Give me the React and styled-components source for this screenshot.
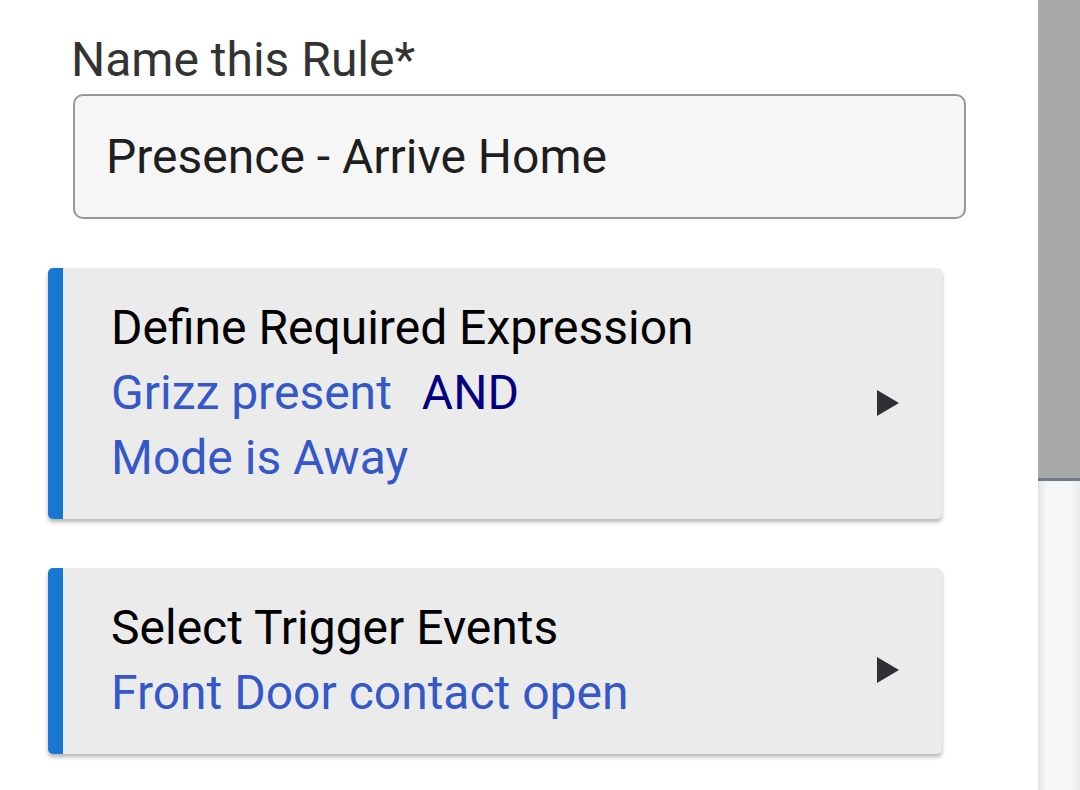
import React from "react";
import styled, { createGlobalStyle } from "styled-components";

const GlobalStyle = createGlobalStyle`
    html, body {
        margin: 0;
        padding: 0;
        background: #ffffff;
        font-family: Roboto, "Noto Sans", "Liberation Sans", sans-serif;
    }
`;

const Page = styled.div`
    display: flex;
    width: 1080px;
    height: 790px;
    overflow: hidden;
    background: #ffffff;
`;

const Content = styled.div`
    flex: 1;
    display: flex;
    flex-direction: column;
    padding: 0 0 0 48px;
`;

const Label = styled.div`
    margin: 30px 0 0 23px;
    font-size: 48px;
    line-height: 60px;
    color: #333333;
`;

const NameInput = styled.div`
    box-sizing: border-box;
    display: flex;
    align-items: center;
    margin: 4px 0 0 25px;
    width: 893px;
    height: 125px;
    padding: 0 0 0 31px;
    border: 2px solid #989898;
    border-radius: 10px;
    background: #f6f6f6;
    font-size: 48px;
    color: #1e1e1e;
`;

const Card = styled.div`
    box-sizing: border-box;
    display: flex;
    align-items: center;
    width: 894px;
    margin-top: ${(props) => props.mTop || "49px"};
    padding: 27px 43px 29px 48px;
    border-left: 15px solid #1976d2;
    border-radius: 5px;
    background: #ebebeb;
    box-shadow: 0 3px 4px rgba(0, 0, 0, 0.3);
`;

const CardText = styled.div`
    flex: 1;
    font-size: 48px;
    line-height: 65px;
`;

const Title = styled.div`
    color: #000000;
`;

const Cond = styled.div`
    color: #3558c8;
`;

const Op = styled.span`
    color: #000080;
    margin-left: 30px;
`;

const Arrow = styled.svg`
    width: 22px;
    height: 26px;
    margin-top: 20px;
    flex-shrink: 0;
`;

const ScrollBar = styled.div`
    width: 42px;
    display: flex;
    flex-direction: column;
`;

const Thumb = styled.div`
    height: 478px;
    background: #a9a9a9;
    border-bottom: 3px solid #6f7b8b;
`;

const Track = styled.div`
    flex: 1;
    background: linear-gradient(to right, #e2e2e2 0px, #f6f6f6 8px, #f6f6f6 32px, #ececec 42px);
`;

const PlayArrow = () => (
    <Arrow viewBox="0 0 22 26">
        <path d="M0 0 L22 13 L0 26 Z" fill="#2e3035" />
    </Arrow>
);

const RuleCard = ({ title, children, mTop }) => (
    <Card mTop={mTop}>
        <CardText>
            <Title>{title}</Title>
            {children}
        </CardText>
        <PlayArrow />
    </Card>
);

const App = () => (
    <>
        <GlobalStyle />
        <Page>
            <Content>
                <Label>Name this Rule*</Label>
                <NameInput>Presence - Arrive Home</NameInput>
                <RuleCard title="Define Required Expression">
                    <Cond>
                        Grizz present<Op>AND</Op>
                    </Cond>
                    <Cond>Mode is Away</Cond>
                </RuleCard>
                <RuleCard title="Select Trigger Events">
                    <Cond>Front Door contact open</Cond>
                </RuleCard>
            </Content>
            <ScrollBar>
                <Thumb />
                <Track />
            </ScrollBar>
        </Page>
    </>
);

export default App;
